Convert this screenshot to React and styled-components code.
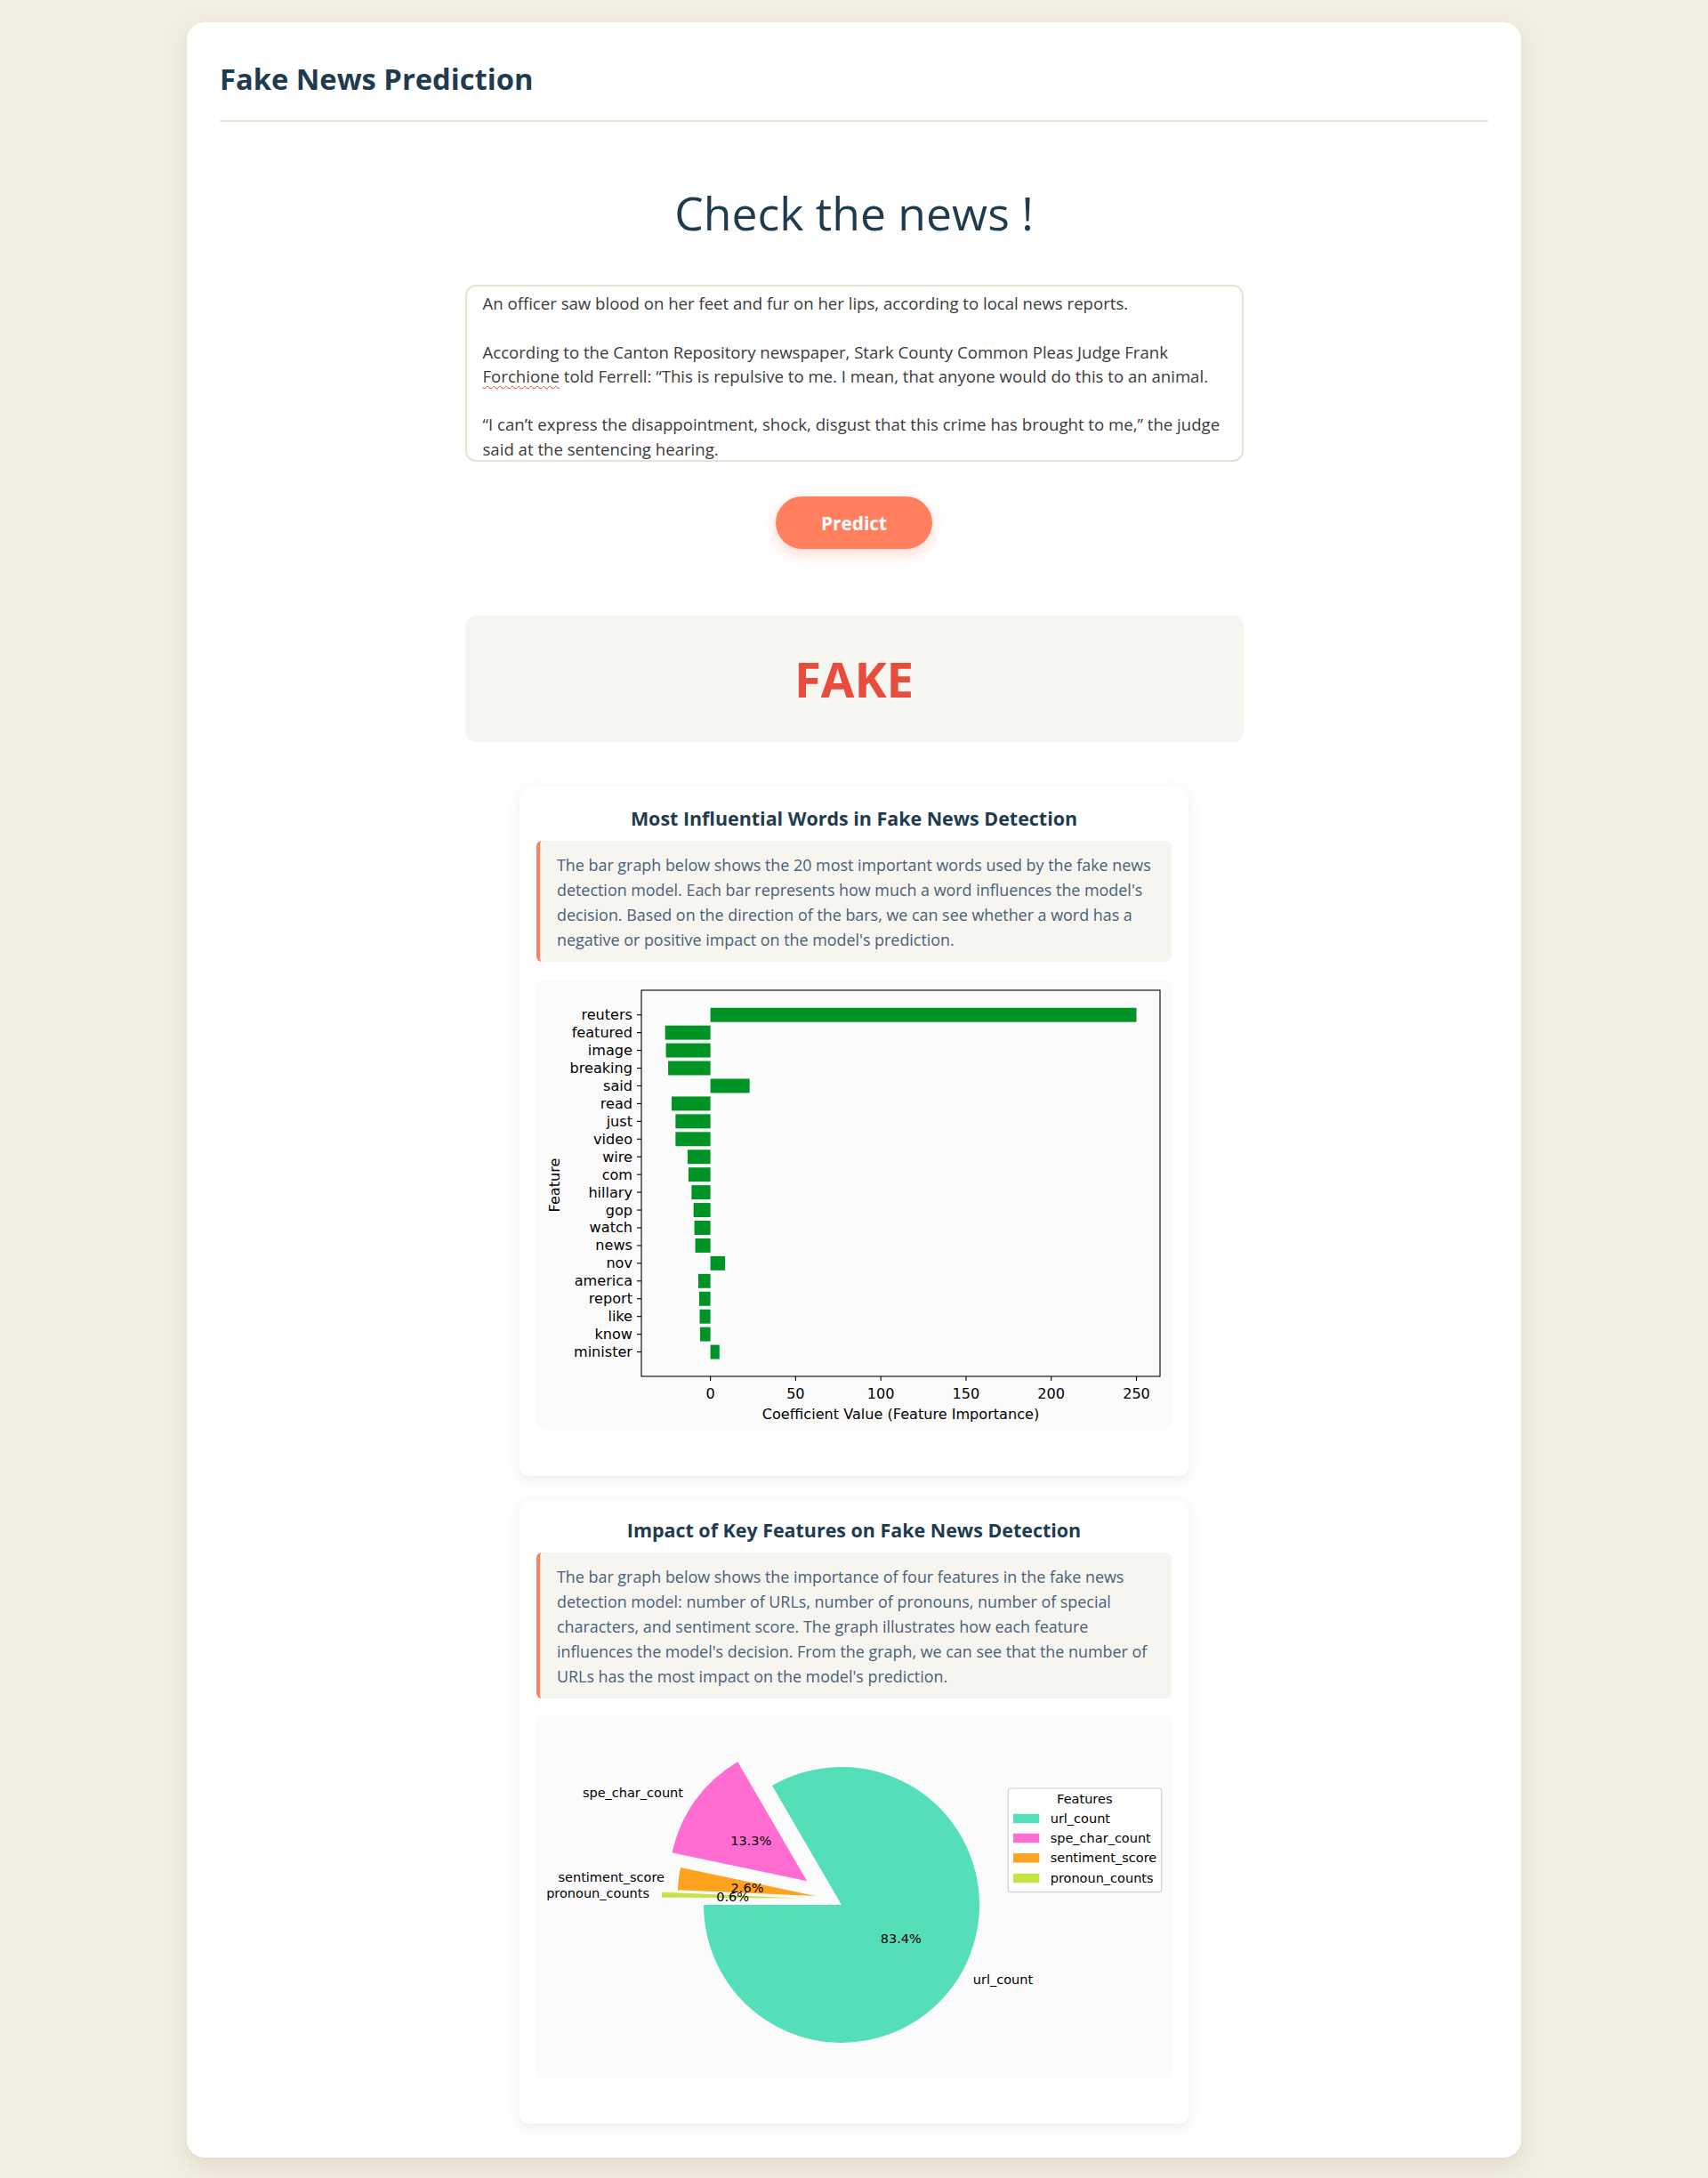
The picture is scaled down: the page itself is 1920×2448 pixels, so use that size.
import React from "react";
import styled, { createGlobalStyle } from "styled-components";

const GlobalStyle = createGlobalStyle`
  * { box-sizing: border-box; }
  body {
    margin: 0;
    background: #f3efe4;
    font-family: "Open Sans", "Noto Sans", sans-serif;
  }
`;

const Page = styled.div`
  padding: 25px 0 23px;
`;

const Shell = styled.div`
  width: 1500px;
  margin: 0 auto;
  background: #fff;
  border-radius: 20px;
  padding: 37px 37px 38px;
  box-shadow: 0 10px 26px rgba(120, 100, 60, 0.16);
`;

const Header = styled.header`
  padding: 8px 0 27px;
  border-bottom: 2px solid #e8e2d3;
`;

const Brand = styled.h1`
  margin: 0;
  font-size: 32.7px;
  line-height: 38px;
  font-weight: 700;
  color: #1f3b50;
`;

const Main = styled.main`
  display: flex;
  flex-direction: column;
  align-items: center;
  padding-top: 72px;
`;

const Heading = styled.h2`
  margin: 0;
  font-size: 51.7px;
  line-height: 60px;
  font-weight: 400;
  color: #1f3b50;
`;

const NewsBox = styled.div`
  margin-top: 51px;
  width: 875px;
  height: 199px;
  border: 2px solid #e8e2d3;
  border-radius: 12px;
  padding: 5px 18px 0;
  overflow: hidden;
  font-size: 18.6px;
  line-height: 27.3px;
  color: #3b3b3b;
`;

const Para = styled.p`
  margin: 0 0 27.3px;
`;

const Misspelled = styled.span`
  text-decoration: underline wavy #e0403a;
  text-decoration-thickness: 1px;
  text-underline-offset: 3px;
`;

const PredictButton = styled.button`
  margin-top: 39px;
  width: 176px;
  height: 59px;
  border: none;
  border-radius: 30px;
  background: #ff7f5e;
  color: #fff;
  font: 700 20.8px "Open Sans", sans-serif;
  box-shadow: 0 6px 16px rgba(255, 127, 94, 0.3);
`;

const Result = styled.div`
  margin-top: 75px;
  width: 875px;
  height: 142px;
  background: #f7f5f0;
  border-radius: 12px;
  display: flex;
  align-items: center;
  justify-content: center;
`;

const Verdict = styled.div`
  font-size: 54.5px;
  font-weight: 700;
  color: #e74c3c;
`;

const ChartCard = styled.section`
  margin-top: ${({ $gap }) => $gap}px;
  width: 752px;
  background: #fff;
  border-radius: 12px;
  box-shadow: 0 4px 16px rgba(0, 0, 0, 0.08);
  padding: ${({ $top }) => $top}px 19px ${({ $bottom }) => $bottom}px;
`;

const ChartTitle = styled.h3`
  margin: 0;
  text-align: center;
  font-size: 21.45px;
  line-height: 30px;
  font-weight: 700;
  color: #1f3b50;
`;

const Explainer = styled.p`
  margin: 10px 0 0;
  background: #f7f5f0;
  border-left: 4px solid #ff7f5e;
  border-radius: 6px;
  padding: 13px 19px 11px;
  font-size: 17.9px;
  line-height: 28.1px;
  color: #4a6178;
`;

const Figure = styled.div`
  margin-top: ${({ $gap }) => $gap}px;
  height: ${({ $h }) => $h}px;
  background: #fbfbfb;
  border-radius: 8px;
  svg {
    display: block;
  }
`;

const MPL = `"DejaVu Sans", sans-serif`;
const GREEN = "#009426";

const BARS = [
  ["reuters", 250],
  ["featured", -26.6],
  ["image", -26.1],
  ["breaking", -24.8],
  ["said", 23],
  ["read", -22.8],
  ["just", -20.5],
  ["video", -20.5],
  ["wire", -13.4],
  ["com", -12.9],
  ["hillary", -11.1],
  ["gop", -9.9],
  ["watch", -9.4],
  ["news", -8.9],
  ["nov", 8.6],
  ["america", -7.1],
  ["report", -6.6],
  ["like", -6.3],
  ["know", -6.1],
  ["minister", 5.3],
];

const xOf = (v) => 195.6 + v * 1.9156;

const BarChart = () => (
  <svg width="714" height="505" viewBox="0 0 714 505">
    {BARS.map(([name, v], i) => {
      const cy = 38.7 + i * 19.94;
      const x0 = xOf(Math.min(0, v));
      const w = Math.abs(xOf(v) - xOf(0));
      return (
        <g key={name}>
          <rect x={x0} y={cy - 7.97} width={w} height={15.95} fill={GREEN} />
          <line x1="113" x2="118" y1={cy} y2={cy} stroke="#000" strokeWidth="1.1" />
          <text x="108" y={cy} textAnchor="end" dominantBaseline="central" fontFamily={MPL} fontSize="16.1" fill="#000">
            {name}
          </text>
        </g>
      );
    })}
    <rect x="118" y="11" width="583" height="434" fill="none" stroke="#000" strokeWidth="1.1" />
    {[0, 50, 100, 150, 200, 250].map((t) => (
      <g key={t}>
        <line x1={xOf(t)} x2={xOf(t)} y1="445" y2="450" stroke="#000" strokeWidth="1.1" />
        <text x={xOf(t)} y="464" textAnchor="middle" dominantBaseline="central" fontFamily={MPL} fontSize="16.1" fill="#000">
          {t}
        </text>
      </g>
    ))}
    <text x="409.5" y="487" textAnchor="middle" dominantBaseline="central" fontFamily={MPL} fontSize="16.1" fill="#000">
      Coefficient Value (Feature Importance)
    </text>
    <text
      x="20.6"
      y="230"
      textAnchor="middle"
      dominantBaseline="central"
      fontFamily={MPL}
      fontSize="16.1"
      fill="#000"
      transform="rotate(-90 20.6 230)"
    >
      Feature
    </text>
  </svg>
);

const pt = (cx, cy, r, deg) => [
  cx + r * Math.cos((deg * Math.PI) / 180),
  cy - r * Math.sin((deg * Math.PI) / 180),
];

const wedge = (cx, cy, r, a0, a1) => {
  const [x0, y0] = pt(cx, cy, r, a0);
  const [x1, y1] = pt(cx, cy, r, a1);
  const large = a1 - a0 > 180 ? 1 : 0;
  return `M${cx},${cy} L${x0},${y0} A${r},${r} 0 ${large} 0 ${x1},${y1} Z`;
};

const SLICES = [
  { name: "url_count", color: "#55deba", c: [343, 213], a: [180, 480.2] },
  { name: "spe_char_count", color: "#ff6cd2", c: [304.2, 186.3], a: [120.2, 168.1] },
  { name: "sentiment_score", color: "#ffa31e", c: [313.7, 203], a: [168.1, 177.5] },
  { name: "pronoun_counts", color: "#c4e446", c: [296, 205.5], a: [177.5, 179.7] },
];

const PIE_LABELS = [
  { t: "spe_char_count", x: 165, y: 87, anchor: "end" },
  { t: "sentiment_score", x: 144, y: 182, anchor: "end" },
  { t: "pronoun_counts", x: 127, y: 200, anchor: "end" },
  { t: "url_count", x: 490.8, y: 297, anchor: "start" },
  { t: "83.4%", x: 409.8, y: 251, anchor: "middle" },
  { t: "13.3%", x: 241.2, y: 141.3, anchor: "middle" },
  { t: "2.6%", x: 237, y: 193.7, anchor: "middle" },
  { t: "0.6%", x: 220.7, y: 203.7, anchor: "middle" },
];

const PieChart = () => (
  <svg width="714" height="409" viewBox="0 0 714 409">
    {SLICES.map((s) => (
      <path key={s.name} d={wedge(s.c[0], s.c[1], 155, s.a[0], s.a[1])} fill={s.color} />
    ))}
    {PIE_LABELS.map((l) => (
      <text key={l.t} x={l.x} y={l.y} textAnchor={l.anchor} dominantBaseline="central" fontFamily={MPL} fontSize="14.5" fill="#000">
        {l.t}
      </text>
    ))}
    <rect x="530.3" y="82" width="172.4" height="116.7" rx="3" fill="#fff" fillOpacity="0.8" stroke="#d0d0d0" strokeWidth="1.2" />
    <text x="616.3" y="93.7" textAnchor="middle" dominantBaseline="central" fontFamily={MPL} fontSize="14.5" fill="#000">
      Features
    </text>
    {SLICES.map((s, i) => {
      const cy = [116, 138, 160.3, 183][i];
      return (
        <g key={s.name}>
          <rect x="536" y={cy - 5.2} width="29.3" height="10.4" fill={s.color} />
          <text x="577.7" y={cy} dominantBaseline="central" fontFamily={MPL} fontSize="14.5" fill="#000">
            {s.name}
          </text>
        </g>
      );
    })}
  </svg>
);

export default function App() {
  return (
    <Page>
      <GlobalStyle />
      <Shell>
        <Header>
          <Brand>Fake News Prediction</Brand>
        </Header>
        <Main>
          <Heading>Check the news !</Heading>
          <NewsBox>
            <Para>An officer saw blood on her feet and fur on her lips, according to local news reports.</Para>
            <Para>
              According to the Canton Repository newspaper, Stark County Common Pleas Judge Frank{" "}
              <Misspelled>Forchione</Misspelled> told Ferrell: “This is repulsive to me. I mean, that anyone would do
              this to an animal.
            </Para>
            <Para>
              “I can’t express the disappointment, shock, disgust that this crime has brought to me,” the judge said at
              the sentencing hearing.
            </Para>
          </NewsBox>
          <PredictButton type="button">Predict</PredictButton>
          <Result>
            <Verdict>FAKE</Verdict>
          </Result>
          <ChartCard $gap={50} $top={21} $bottom={51.6}>
            <ChartTitle>Most Influential Words in Fake News Detection</ChartTitle>
            <Explainer>
              The bar graph below shows the 20 most important words used by the fake news detection model. Each bar
              represents how much a word influences the model's decision. Based on the direction of the bars, we can see
              whether a word has a negative or positive impact on the model's prediction.
            </Explainer>
            <Figure $gap={21} $h={505}>
              <BarChart />
            </Figure>
          </ChartCard>
          <ChartCard $gap={27} $top={19} $bottom={50}>
            <ChartTitle>Impact of Key Features on Fake News Detection</ChartTitle>
            <Explainer>
              The bar graph below shows the importance of four features in the fake news detection model: number of
              URLs, number of pronouns, number of special characters, and sentiment score. The graph illustrates how
              each feature influences the model's decision. From the graph, we can see that the number of URLs has the
              most impact on the model's prediction.
            </Explainer>
            <Figure $gap={18.5} $h={409}>
              <PieChart />
            </Figure>
          </ChartCard>
        </Main>
      </Shell>
    </Page>
  );
}
